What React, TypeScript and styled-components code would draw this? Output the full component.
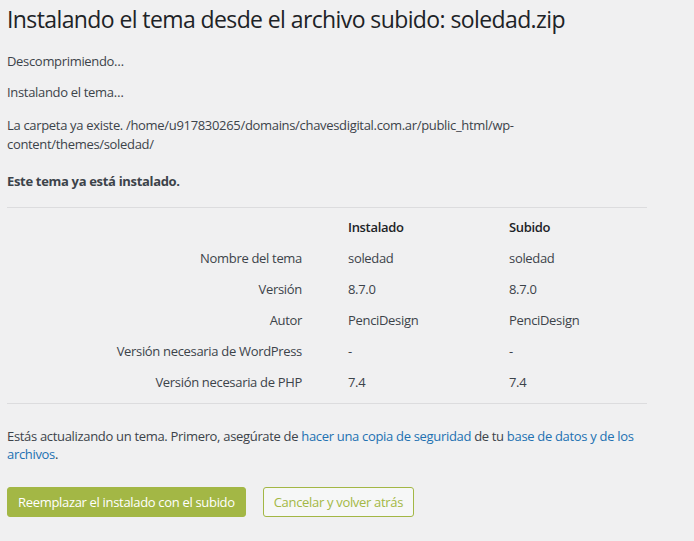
import styled, { createGlobalStyle } from "styled-components";

const GlobalStyle = createGlobalStyle`
  html, body {
    margin: 0;
    background: #f0f0f1;
  }
  body {
    font-family: "Segoe UI", "Open Sans", "Noto Sans", sans-serif;
    font-size: 13px;
    line-height: 1.4em;
    letter-spacing: -0.32px;
    color: #3c434a;
  }
`;

type Row = {
  label: string;
  installed: string;
  uploaded: string;
};

const rows: Row[] = [
  { label: "Nombre del tema", installed: "soledad", uploaded: "soledad" },
  { label: "Versión", installed: "8.7.0", uploaded: "8.7.0" },
  { label: "Autor", installed: "PenciDesign", uploaded: "PenciDesign" },
  { label: "Versión necesaria de WordPress", installed: "-", uploaded: "-" },
  { label: "Versión necesaria de PHP", installed: "7.4", uploaded: "7.4" },
];

function App() {
  return (
    <Wrap>
      <GlobalStyle />
      <Title>Instalando el tema desde el archivo subido: soledad.zip</Title>
      <Text>Descomprimiendo…</Text>
      <Text>Instalando el tema…</Text>
      <Text $top={15}>
        La carpeta ya existe. /home/u917830265/domains/chavesdigital.com.ar/public_html/wp-content/themes/soledad/
      </Text>
      <Text $top={19}>
        <strong>Este tema ya está instalado.</strong>
      </Text>

      <Comparison>
        <Cell />
        <HeadCell>Instalado</HeadCell>
        <HeadCell>Subido</HeadCell>
        {rows.map((row) => (
          <Row key={row.label}>
            <Label>{row.label}</Label>
            <Cell>{row.installed}</Cell>
            <Cell>{row.uploaded}</Cell>
          </Row>
        ))}
      </Comparison>

      <Text>
        Estás actualizando un tema. Primero, asegúrate de{" "}
        <Link href="#">hacer una copia de seguridad</Link> de tu{" "}
        <Link href="#">base de datos y de los archivos</Link>.
      </Text>

      <Actions>
        <PrimaryButton>Reemplazar el instalado con el subido</PrimaryButton>
        <SecondaryButton>Cancelar y volver atrás</SecondaryButton>
      </Actions>
    </Wrap>
  );
}

export default App;

const Wrap = styled.div`
  width: 640px;
  padding: 0 0 24px 7px;
`;

const Title = styled.h1`
  margin: 0;
  padding: 5px 0 4px;
  font-size: 23px;
  font-weight: 400;
  line-height: 1.3;
  letter-spacing: -0.6px;
  color: #1d2327;
`;

const Text = styled.p<{ $top?: number }>`
  margin: ${(p) => p.$top ?? 13}px 0 13px;
  font-size: 13px;
  line-height: 1.4em;
`;

const Comparison = styled.div`
  display: grid;
  grid-template-columns: 331px 161px 1fr;
  grid-auto-rows: 31px;
  align-items: center;
  margin: 17px 0 23px;
  padding: 4px 0 5px;
  border-top: 1px solid #dcdcde;
  border-bottom: 1px solid #dcdcde;
`;

const Row = styled.div`
  display: contents;
`;

const Cell = styled.div`
  padding-left: 10px;
`;

const HeadCell = styled(Cell)`
  font-weight: 600;
  color: #1d2327;
`;

const Label = styled(Cell)`
  padding-right: 36px;
  text-align: right;
`;

const Link = styled.a`
  color: #2271b1;
  text-decoration: none;
`;

const Actions = styled.div`
  display: flex;
  gap: 17px;
  margin-top: 24px;
`;

const Button = styled.button`
  height: 30px;
  padding: 0 10px;
  border-radius: 3px;
  font-family: inherit;
  font-size: 13px;
  letter-spacing: inherit;
  cursor: pointer;
`;

const PrimaryButton = styled(Button)`
  background: #a3b745;
  border: 1px solid #a3b745;
  color: #fff;
`;

const SecondaryButton = styled(Button)`
  background: #f6f7f7;
  border: 1px solid #a3b745;
  color: #a3b745;
`;
